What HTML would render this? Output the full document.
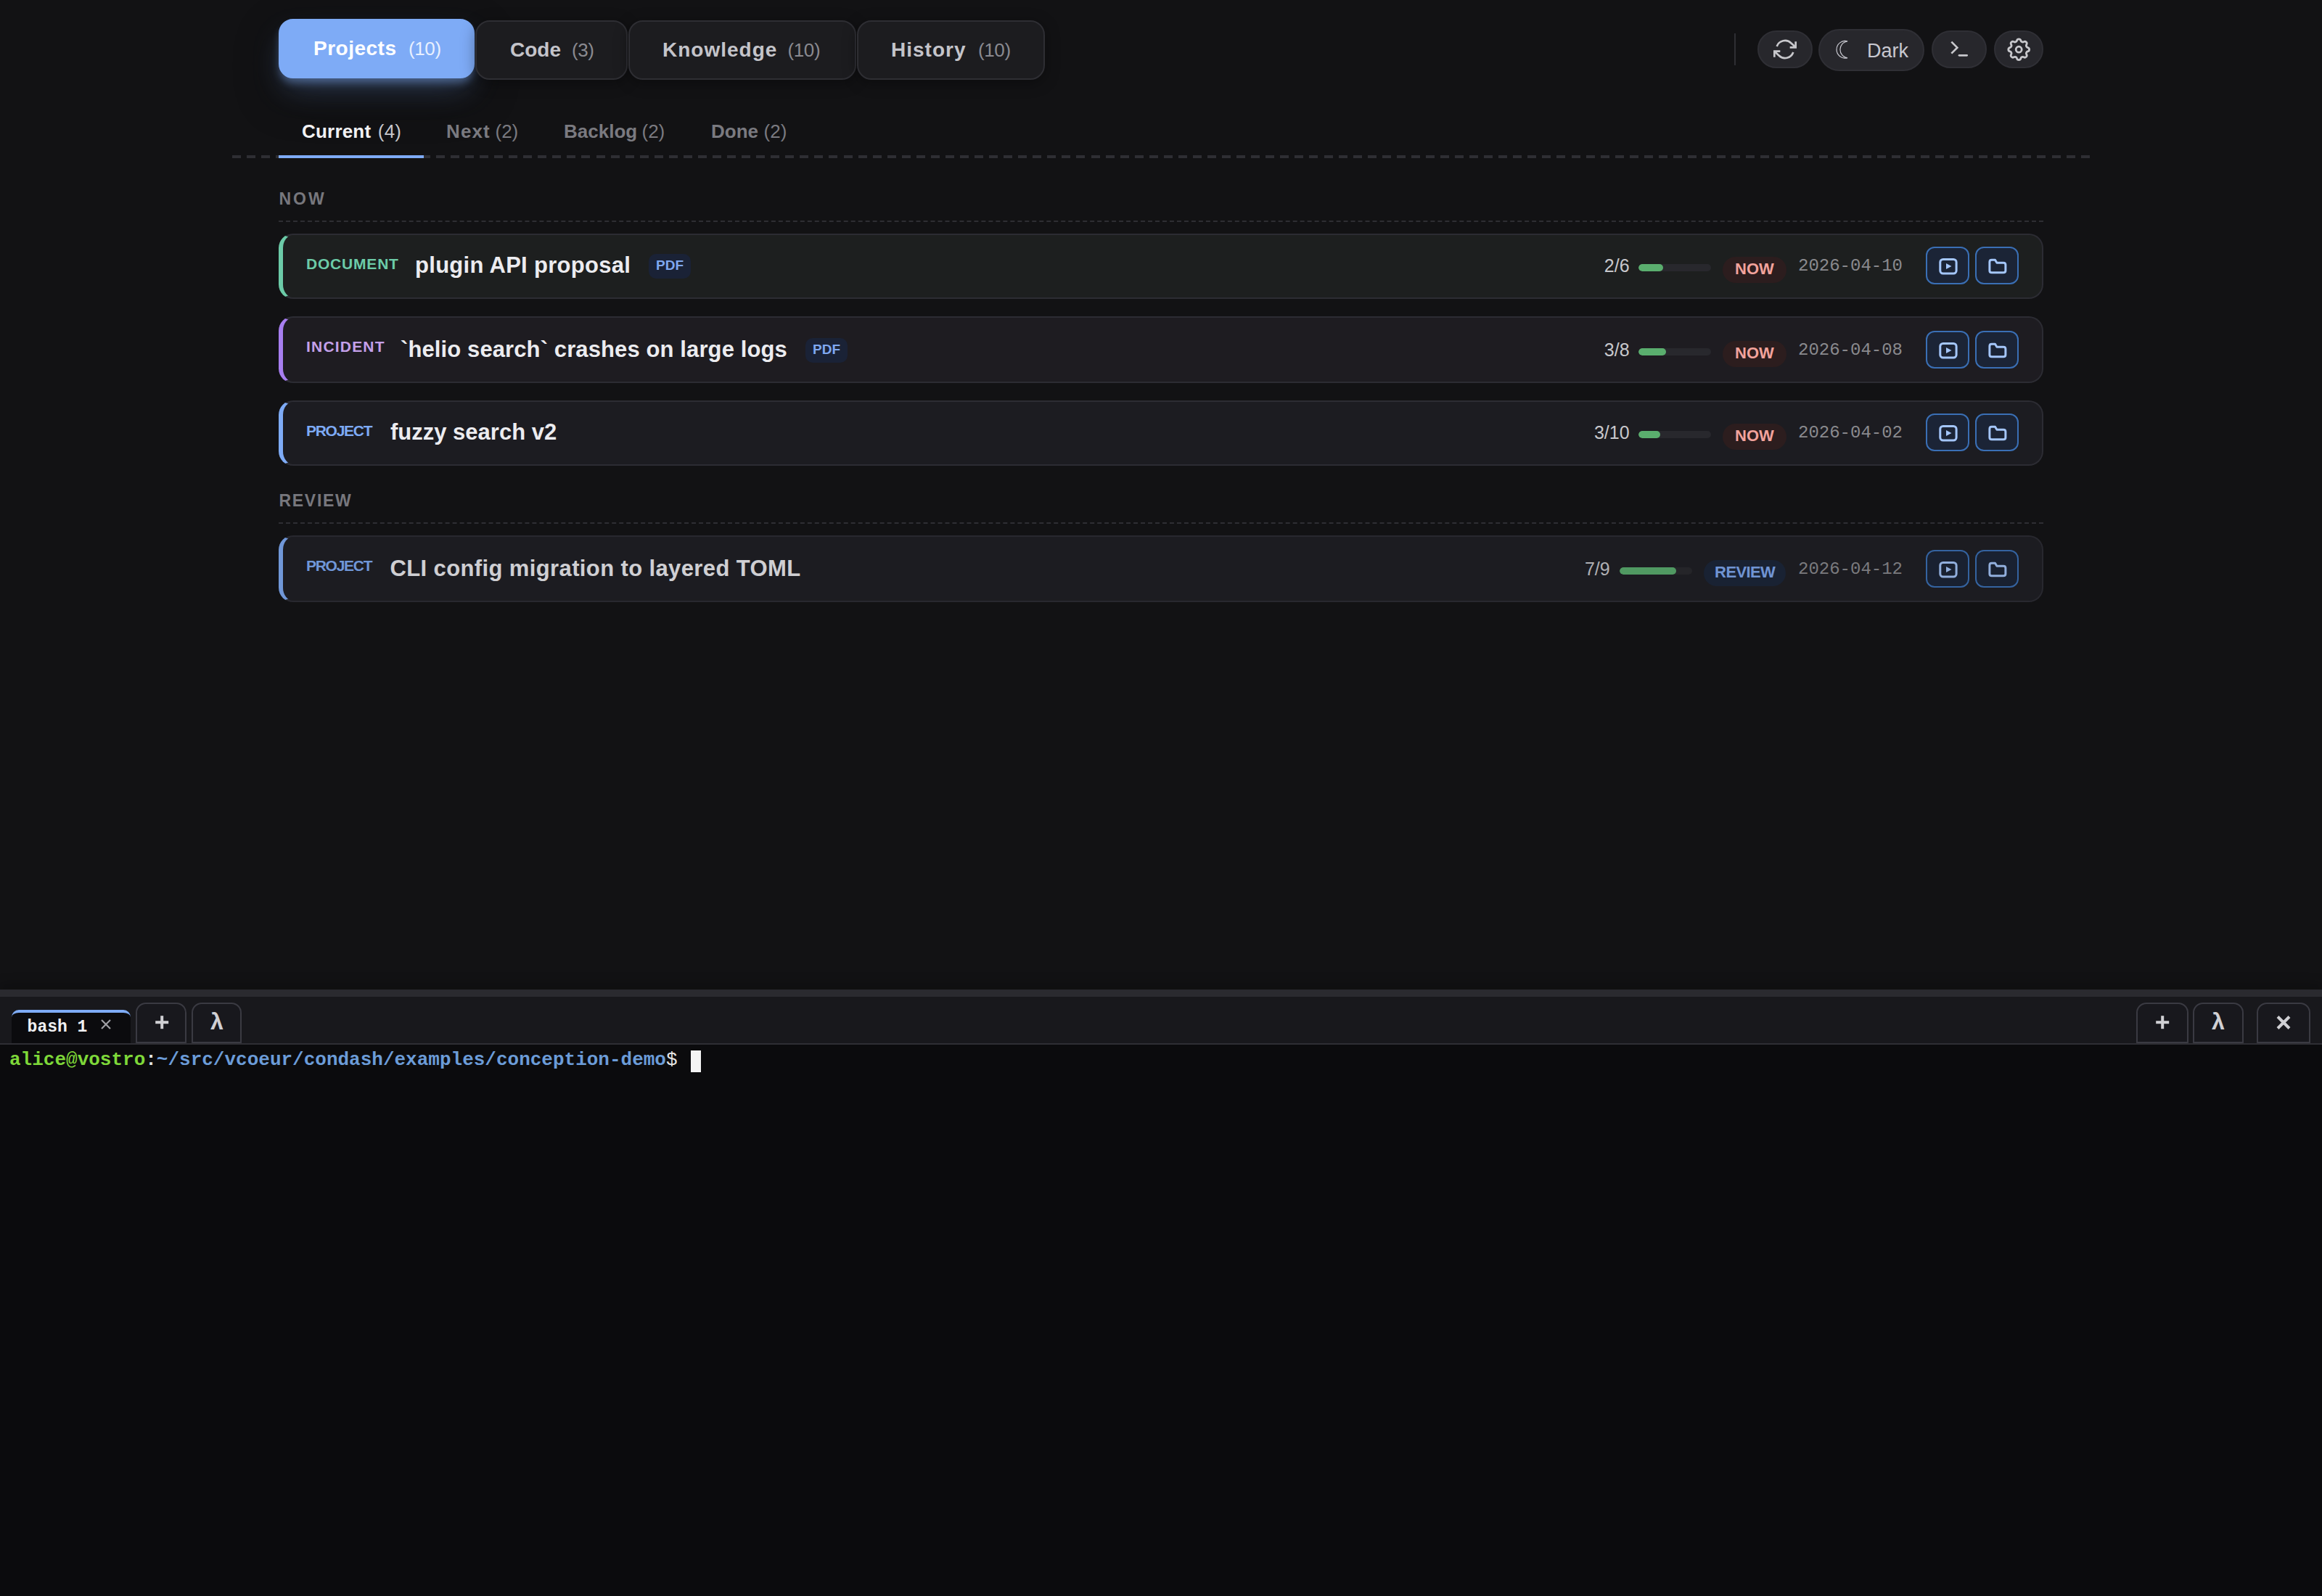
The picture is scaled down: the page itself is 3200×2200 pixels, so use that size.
<!DOCTYPE html>
<html>
<head>
<meta charset="utf-8">
<style>
html,body{margin:0;padding:0;}
@media (min-width:2400px){ html{zoom:2;} }
body{width:1600px;height:1100px;overflow:hidden;background:#121214;position:relative;font-family:"Liberation Sans",sans-serif;color:#e8e8ec;}
.abs{position:absolute;}
svg{display:block;}
/* top nav */
.nav{position:absolute;top:14px;height:41px;box-sizing:border-box;border:1px solid #2e2e33;background:#1c1c1f;border-radius:10px;color:#c4c4ca;font-weight:bold;font-size:14px;line-height:39px;white-space:nowrap;box-shadow:0 2px 10px rgba(0,0,0,0.35);}
.nav span{position:absolute;top:0;}
.nav .c{font-weight:normal;color:#8a8a90;font-size:13px;letter-spacing:-0.2px;}
.nav.active{top:13px;background:#7eabf6;border-color:#7eabf6;color:#fff;box-shadow:0 4px 6px -1px rgba(126,171,246,0.42),0 10px 22px -4px rgba(126,171,246,0.32),0 12px 30px rgba(0,0,0,0.45);}
.nav.active .c{color:#e8f0ff;}
.tb{position:absolute;box-sizing:border-box;background:#27272c;border:1px solid #2f2f35;border-radius:15px;color:#c8c8cc;}
.tb svg{position:absolute;}
/* sub tabs */
.subbar{position:absolute;left:160px;top:107px;width:1280px;height:2px;background:repeating-linear-gradient(90deg,#2e2e33 0 6px,transparent 6px 10.03px);}
.st{position:absolute;top:81.5px;font-size:13px;font-weight:bold;color:#7a7a80;white-space:nowrap;line-height:18px;}
.st .c{font-weight:normal;position:absolute;top:0;}
.st.on{color:#f2f2f4;}
.st.on .c{color:#c8c8cc;}
.uline{position:absolute;left:192px;top:107px;width:100px;height:2px;background:#7eabf6;}
.sec{position:absolute;left:192.25px;font-size:11.5px;font-weight:bold;letter-spacing:1.1px;color:#77777d;line-height:14px;}
.dash{position:absolute;left:192px;width:1216px;height:0;border-top:1px dashed #2e2e33;}
.card{position:absolute;left:192px;width:1216px;height:45px;box-sizing:border-box;border:1px solid #2c2c33;border-left:3px solid #7eabf6;border-radius:10px;background:#1c1c21;}
.card > *{position:absolute;}
.card.tall{height:46px;}
.card.tall > *:not(.lbl){margin-top:1px;}
.lbl{left:16px;top:13px;line-height:14px;font-size:10.5px;font-weight:bold;letter-spacing:0.4px;white-space:nowrap;}
.ttl{top:11px;line-height:20px;font-size:15.5px;font-weight:bold;color:#ececf0;white-space:nowrap;}
.pdf{top:13px;height:17px;width:29px;border-radius:5px;background:#1a2236;color:#7fa8f0;font-size:9.5px;font-weight:bold;text-align:center;line-height:16px;}
.cnt{top:13.75px;font-size:12.5px;color:#c8c8cc;line-height:14px;white-space:nowrap;text-align:right;}
.bar{top:20px;width:50px;height:5px;border-radius:3px;background:#28282d;overflow:hidden;}
.bar i{position:absolute;left:0;top:0;bottom:0;background:#5aae6e;border-radius:3px;}
.badge{top:15px;height:18px;border-radius:9px;font-size:11px;font-weight:bold;text-align:center;line-height:16.5px;}
.now{background:#2c1d1e;color:#f2a39c;}
.rev{background:#1b2538;color:#7fa8f0;}
.date{top:14.5px;font-family:"Liberation Mono",monospace;font-size:12px;color:#8a8a8e;line-height:14px;white-space:nowrap;}
.ib{top:8px;width:30px;height:26px;box-sizing:border-box;border:1px solid #3a6fb5;border-radius:6px;background:#1b2436;}
.ib svg{position:absolute;left:0;top:0;}
/* terminal */
.handle{position:absolute;left:0;top:682px;width:1600px;height:5px;background:#2a2a2f;box-shadow:0 -3px 8px rgba(0,0,0,0.35);}
.tbar{position:absolute;left:0;top:687px;width:1600px;height:33px;background:#18181c;border-bottom:1px solid #2e2e34;box-sizing:border-box;}
.term{position:absolute;left:0;top:720px;width:1600px;height:380px;background:#0b0b0d;}
.ttab{position:absolute;top:696px;left:8px;width:82px;height:23px;background:#0b0b0e;border-top:2px solid #7eabf6;border-radius:5px 5px 0 0;box-sizing:border-box;}
.tbtn{position:absolute;top:691px;height:28px;width:36px;box-sizing:border-box;border:1px solid #3a3a42;border-radius:7px 7px 0 0;background:#18181d;color:#c8c8cc;text-align:center;font-weight:bold;}
.tbtn svg{position:absolute;left:0;top:0;}
.mono{font-family:"Liberation Mono",monospace;}
</style>
</head>
<body>
<!-- top nav -->
<div class="nav active" style="left:192px;width:135px;"><span style="left:23px;letter-spacing:0.25px;">Projects</span><span class="c" style="left:88.5px;">(10)</span></div>
<div class="nav" style="left:327.5px;width:105px;"><span style="left:23px;">Code</span><span class="c" style="left:65.5px;">(3)</span></div>
<div class="nav" style="left:433px;width:157px;"><span style="left:22.5px;letter-spacing:0.5px;">Knowledge</span><span class="c" style="left:108.75px;">(10)</span></div>
<div class="nav" style="left:590.5px;width:129.5px;"><span style="left:22.5px;letter-spacing:0.5px;">History</span><span class="c" style="left:82.5px;">(10)</span></div>

<div class="abs" style="left:1195px;top:23px;width:1px;height:22px;background:#2e2e33;"></div>
<div class="tb" style="left:1211px;top:21px;width:38px;height:26px;">
 <svg style="left:10px;top:4px;" width="16" height="16" viewBox="0 0 24 24" fill="none" stroke="#c8c8cc" stroke-width="2" stroke-linecap="butt" stroke-linejoin="miter"><polyline points="23 4 23 10 17 10"/><polyline points="1 20 1 14 7 14"/><path d="M3.51 9a9 9 0 0 1 14.85-3.36L23 10M1 14l4.64 4.36A9 9 0 0 0 20.49 15"/></svg>
</div>
<div class="tb" style="left:1253px;top:20px;width:73px;height:29px;">
 <svg style="left:0;top:0;" width="30" height="28" viewBox="0 0 30 28"><path d="M19 7.4 A5.95 5.95 0 1 0 19 18.9 A5.8 5.8 0 0 1 19 7.4 Z" fill="none" stroke="#c8c8d0" stroke-width="0.6"/></svg>
 <span style="position:absolute;left:32.5px;top:6px;font-size:13.5px;line-height:16px;color:#c8c8d0;">Dark</span>
</div>
<div class="tb" style="left:1331px;top:21px;width:38px;height:26px;">
 <svg style="left:9.75px;top:3.5px;" width="16" height="16" viewBox="0 0 24 24" fill="none" stroke="#c8c8cc" stroke-width="2" stroke-linecap="round" stroke-linejoin="miter"><polyline points="4 17 10 11 4 5" stroke-linecap="butt"/><line x1="12" y1="19" x2="20" y2="19"/></svg>
</div>
<div class="tb" style="left:1374px;top:21px;width:34px;height:26px;">
 <svg style="left:6.4px;top:2.4px;" width="19.2" height="19.2" viewBox="0 0 24 24" fill="none" stroke="#c8c8cc" stroke-width="1.75" stroke-linecap="round" stroke-linejoin="round"><path d="M10.325 4.317c.426 -1.756 2.924 -1.756 3.35 0a1.724 1.724 0 0 0 2.573 1.066c1.543 -.94 3.31 .826 2.37 2.37a1.724 1.724 0 0 0 1.065 2.572c1.756 .426 1.756 2.924 0 3.35a1.724 1.724 0 0 0 -1.066 2.573c.94 1.543 -.826 3.31 -2.37 2.37a1.724 1.724 0 0 0 -2.572 1.065c-.426 1.756 -2.924 1.756 -3.35 0a1.724 1.724 0 0 0 -2.573 -1.066c-1.543 .94 -3.31 -.826 -2.37 -2.37a1.724 1.724 0 0 0 -1.065 -2.572c-1.756 -.426 -1.756 -2.924 0 -3.35a1.724 1.724 0 0 0 1.066 -2.573c-.94 -1.543 .826 -3.31 2.37 -2.37c1 .608 2.296 .07 2.572 -1.065z"/><circle cx="12" cy="12" r="2.5"/></svg>
</div>

<!-- sub tabs -->
<div class="subbar"></div>
<div class="st on" style="left:208px;letter-spacing:0.1px;">Current<span class="c" style="left:52.4px;">(4)</span></div>
<div class="st" style="left:307.5px;"><span style="letter-spacing:0.55px;">Next</span><span class="c" style="left:33.75px;">(2)</span></div>
<div class="st" style="left:388.5px;">Backlog<span class="c" style="left:53.75px;">(2)</span></div>
<div class="st" style="left:490px;">Done<span class="c" style="left:36.3px;">(2)</span></div>
<div class="uline"></div>

<div class="sec" style="top:130px;letter-spacing:1.5px;">NOW</div>
<div class="dash" style="top:152px;"></div>
<div class="card" style="top:161px;border-left-color:#6ccba8;background:#1d1f1f;"><div class="lbl" style="color:#6ccba8;">DOCUMENT</div><div class="ttl" style="left:91px;letter-spacing:0.145px;">plugin API proposal</div><div class="pdf" style="left:252px;">PDF</div><div class="cnt" style="right:284.20000000000005px;">2/6</div><div class="bar" style="left:934px;"><i style="width:17px;"></i></div><div class="badge now" style="left:992px;width:44px;">NOW</div><div class="date" style="left:1044px;">2026-04-10</div><div class="ib" style="left:1132px;"><svg width="28" height="24" viewBox="0 0 28 24" fill="none" stroke="#a4c6fa" stroke-width="1.5"><rect x="8.9" y="7.7" width="11.15" height="9.8" rx="2"/><path d="M13 10.5 L13 14.5 L16.75 12.5 Z" fill="#a4c6fa" stroke="none"/></svg></div><div class="ib" style="left:1166px;"><svg width="28" height="24" viewBox="0 0 28 24" fill="none" stroke="#a4c6fa" stroke-width="1.5" stroke-linejoin="round"><path d="M8.95 9.6 Q8.95 8.15 10.4 8.15 H12.75 L13.95 10.1 H18.5 Q19.95 10.1 19.95 11.55 V15.45 Q19.95 16.9 18.5 16.9 H10.4 Q8.95 16.9 8.95 15.45 Z"/></svg></div></div>
<div class="card tall" style="top:218px;border-left-color:#a77ef0;background:#1e1c21;"><div class="lbl" style="color:#c4a0ea;letter-spacing:0.6px;">INCIDENT</div><div class="ttl" style="left:81px;letter-spacing:0.055px;">`helio search` crashes on large logs</div><div class="pdf" style="left:360px;">PDF</div><div class="cnt" style="right:284.20000000000005px;">3/8</div><div class="bar" style="left:934px;"><i style="width:19px;"></i></div><div class="badge now" style="left:992px;width:44px;">NOW</div><div class="date" style="left:1044px;">2026-04-08</div><div class="ib" style="left:1132px;"><svg width="28" height="24" viewBox="0 0 28 24" fill="none" stroke="#a4c6fa" stroke-width="1.5"><rect x="8.9" y="7.7" width="11.15" height="9.8" rx="2"/><path d="M13 10.5 L13 14.5 L16.75 12.5 Z" fill="#a4c6fa" stroke="none"/></svg></div><div class="ib" style="left:1166px;"><svg width="28" height="24" viewBox="0 0 28 24" fill="none" stroke="#a4c6fa" stroke-width="1.5" stroke-linejoin="round"><path d="M8.95 9.6 Q8.95 8.15 10.4 8.15 H12.75 L13.95 10.1 H18.5 Q19.95 10.1 19.95 11.55 V15.45 Q19.95 16.9 18.5 16.9 H10.4 Q8.95 16.9 8.95 15.45 Z"/></svg></div></div>
<div class="card" style="top:276px;border-left-color:#7eabf6;background:#1c1c21;"><div class="lbl" style="color:#7eabf6;letter-spacing:-0.64px;">PROJECT</div><div class="ttl" style="left:74px;">fuzzy search v2</div><div class="cnt" style="right:284.20000000000005px;">3/10</div><div class="bar" style="left:934px;"><i style="width:15px;"></i></div><div class="badge now" style="left:992px;width:44px;">NOW</div><div class="date" style="left:1044px;">2026-04-02</div><div class="ib" style="left:1132px;"><svg width="28" height="24" viewBox="0 0 28 24" fill="none" stroke="#a4c6fa" stroke-width="1.5"><rect x="8.9" y="7.7" width="11.15" height="9.8" rx="2"/><path d="M13 10.5 L13 14.5 L16.75 12.5 Z" fill="#a4c6fa" stroke="none"/></svg></div><div class="ib" style="left:1166px;"><svg width="28" height="24" viewBox="0 0 28 24" fill="none" stroke="#a4c6fa" stroke-width="1.5" stroke-linejoin="round"><path d="M8.95 9.6 Q8.95 8.15 10.4 8.15 H12.75 L13.95 10.1 H18.5 Q19.95 10.1 19.95 11.55 V15.45 Q19.95 16.9 18.5 16.9 H10.4 Q8.95 16.9 8.95 15.45 Z"/></svg></div></div>
<div class="card tall" style="top:369px;border-left-color:#7eabf6;background:#1e1e23;opacity:0.87;"><div class="lbl" style="color:#7eabf6;letter-spacing:-0.64px;">PROJECT</div><div class="ttl" style="left:73.75px;letter-spacing:0.19px;">CLI config migration to layered TOML</div><div class="cnt" style="right:297.6500000000001px;">7/9</div><div class="bar" style="left:921px;"><i style="width:39px;"></i></div><div class="badge rev" style="left:979px;width:56.7px;letter-spacing:-0.3px;">REVIEW</div><div class="date" style="left:1044px;">2026-04-12</div><div class="ib" style="left:1132px;"><svg width="28" height="24" viewBox="0 0 28 24" fill="none" stroke="#a4c6fa" stroke-width="1.5"><rect x="8.9" y="7.7" width="11.15" height="9.8" rx="2"/><path d="M13 10.5 L13 14.5 L16.75 12.5 Z" fill="#a4c6fa" stroke="none"/></svg></div><div class="ib" style="left:1166px;"><svg width="28" height="24" viewBox="0 0 28 24" fill="none" stroke="#a4c6fa" stroke-width="1.5" stroke-linejoin="round"><path d="M8.95 9.6 Q8.95 8.15 10.4 8.15 H12.75 L13.95 10.1 H18.5 Q19.95 10.1 19.95 11.55 V15.45 Q19.95 16.9 18.5 16.9 H10.4 Q8.95 16.9 8.95 15.45 Z"/></svg></div></div>

<div class="sec" style="top:338px;letter-spacing:0.85px;">REVIEW</div>
<div class="dash" style="top:360px;"></div>

<!-- terminal -->
<div class="handle"></div>
<div class="tbar"></div>
<div class="term"></div>
<div class="ttab"><span class="mono" style="position:absolute;left:10.8px;top:3px;font-size:11.5px;font-weight:bold;line-height:14px;color:#f0f0f2;white-space:pre;">bash 1</span>
 <svg style="position:absolute;left:61px;top:4px;" width="8" height="8" viewBox="0 0 8 8" stroke="#a0a0a6" stroke-width="1.1"><line x1="1" y1="1" x2="7" y2="7"/><line x1="7" y1="1" x2="1" y2="7"/></svg>
</div>
<div class="tbtn" style="left:93.4px;width:35.3px;"><svg width="34" height="28" viewBox="0 0 34 28" stroke="#d0d0d4" stroke-width="2"><line x1="12.6" y1="12.6" x2="21.6" y2="12.6"/><line x1="17.1" y1="8.1" x2="17.1" y2="17.1"/></svg></div>
<div class="tbtn" style="left:132.2px;width:34.5px;"><span style="position:absolute;left:0;right:0;top:3px;font-size:16px;line-height:18px;color:#d0d0d4;">&#955;</span></div>
<div class="tbtn" style="left:1472px;width:36px;"><svg width="34" height="28" viewBox="0 0 34 28" stroke="#d0d0d4" stroke-width="2"><line x1="12.6" y1="12.6" x2="21.6" y2="12.6"/><line x1="17.1" y1="8.1" x2="17.1" y2="17.1"/></svg></div>
<div class="tbtn" style="left:1511px;width:35px;"><span style="position:absolute;left:0;right:0;top:3px;font-size:16px;line-height:18px;color:#d0d0d4;">&#955;</span></div>
<div class="tbtn" style="left:1555px;width:37px;"><svg width="35" height="28" viewBox="0 0 35 28" stroke="#d0d0d4" stroke-width="2"><line x1="13.5" y1="8.75" x2="21.5" y2="16.75"/><line x1="21.5" y1="8.75" x2="13.5" y2="16.75"/></svg></div>
<div class="mono" style="position:absolute;left:6.5px;top:723px;font-size:13px;line-height:15px;font-weight:bold;white-space:pre;color:#e6e6e6;"><span style="color:#7ed839;">alice<span style="font-weight:normal;">@</span>vostro</span>:<span style="color:#6b9cd8;">~/src/vcoeur/condash/examples/conception-demo</span><span style="font-weight:normal;">$</span> </div>
<div style="position:absolute;left:476px;top:724px;width:7px;height:15px;background:#f4f4f4;"></div>
</body>
</html>
